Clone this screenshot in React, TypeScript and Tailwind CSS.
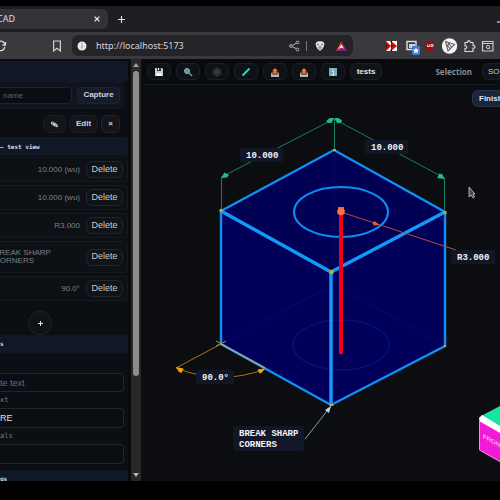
import React from "react";

interface Annotation {
    value: string;
    tall?: boolean;
}

const annotations: Annotation[] = [
    {value: "10.000 (wu)"},
    {value: "10.000 (wu)"},
    {value: "R3.000"},
    {value: "BREAK SHARP\nCORNERS", tall: true},
    {value: "90.0°"},
];

const BrowserBar: React.FC = () => (
    <header className="shrink-0 font-['Noto_Sans',sans-serif] text-[#dedee2]">
        <div className="flex h-[26px] items-end bg-[#1e1d22] pt-[3px]">
            <div className="flex h-5 w-[108px] items-center justify-between self-start rounded-r-md bg-[#333237] pr-[7px] text-[9px]">
                <span className="-ml-[3px]">CAD</span>
                <button aria-label="Close tab">
                    <svg width="8" height="8" viewBox="0 0 8 8" stroke="#eeeeee" strokeWidth="1.3"><path d="M1.6 1.6l4.8 4.8M6.4 1.6L1.6 6.4"/></svg>
                </button>
            </div>
            <button aria-label="New tab" className="ml-[9px] h-5 self-start">
                <svg width="9" height="9" viewBox="0 0 9 9" stroke="#dddddd" strokeWidth="1.2"><path d="M4.5 1v7M1 4.5h7"/></svg>
            </button>
            <button aria-label="Minimize" className="ml-auto h-5 w-[3px] self-start bg-transparent">
                <svg width="3" height="9" viewBox="0 0 3 9" stroke="#ffffff"><path d="M0 7h3"/></svg>
            </button>
        </div>
        <div className="flex h-[27px] items-center bg-[#3a393e]">
            <button aria-label="Reload">
                <svg width="7" height="12" viewBox="0 0 7 12" fill="none" stroke="#d8d8dc" strokeWidth="1.3"><path d="M-2 2C1 .2 4 1.500 4.800 4.500M4.800 7C4 10.500 1 11.500-2 10M5.500 2v3.200H2.300"/></svg>
            </button>
            <button aria-label="Bookmark" className="ml-[45px]">
                <svg width="10" height="12" viewBox="0 0 10 12" fill="none" stroke="#d0d0d4" strokeWidth="1.2"><path d="M1.600 1h6.800v10L5 8.200 1.600 11z"/></svg>
            </button>
            <div className="ml-[10px] flex h-[21px] w-[281px] items-center rounded-md bg-[#242328] pl-[5px] pr-1">
                <svg width="10" height="10" viewBox="0 0 10 10"><circle cx="5" cy="5" r="4.500" fill="#e8e8ea"/><path d="M5 2.200v1M5 4.200v3.300" stroke="#8b8b90" strokeWidth="1.200"/></svg>
                <input aria-label="Address" defaultValue="http://localhost:5173" className="ml-[9px] w-0 min-w-0 flex-1 bg-transparent text-[9px] text-[#d5d5da] outline-none"/>
                <svg width="64" height="14" viewBox="0 0 64 14" fill="none">
                    <path d="M13 3.500L6 7l7 3.500" stroke="#b0b0b5"/>
                    <circle cx="6" cy="7" r="1.400" fill="#242328" stroke="#b0b0b5"/>
                    <circle cx="12.500" cy="3.500" r="1.400" fill="#242328" stroke="#b0b0b5"/>
                    <circle cx="12.500" cy="10.500" r="1.400" fill="#242328" stroke="#b0b0b5"/>
                    <path d="M21.500 2v10" stroke="#77767c"/>
                    <path d="M31.500 3l2-.8h3l2 .8 1 2-1.300 4-3.200 3-3.200-3-1.300-4z" fill="#e1e1e4"/>
                    <path d="M32 5l2 1M38 5l-2 1M33.500 8.500L35 7.500l1.500 1M35 9v1.500" stroke="#55545a"/>
                    <path d="M56.500 2L51 12h5.500z" fill="#ff4724"/>
                    <path d="M56.500 2L62 12h-5.500z" fill="#9e1f63"/>
                    <path d="M51 12l5.500-3.200L62 12z" fill="#662d91"/>
                    <path d="M56.500 5.500L54 9.800l2.500-1.300L59 9.800z" fill="#ffffff"/>
                </svg>
            </div>
            <svg className="ml-auto shrink-0" width="116" height="18" viewBox="384 36 116 18" fill="none">
                <path d="M386 40h11v10h-11z" fill="#f4f4f4"/>
                <path d="M386 40l5 5-5 5zM391 40l6 5-6 5z" fill="#dc0808"/>
                <path d="M386 43l2 2-2 2zM390 40h2v3zM390 50h2v-3zM391 43l2 2-2 2z" fill="#241010"/>
                <path d="M407 40.500h9v8h-9z" stroke="#e0e0e0" strokeWidth="1.400"/>
                <path d="M409 43h6v4h-6z" fill="#d0d0d0"/>
                <rect x="412" y="45" width="8" height="9" rx="1" fill="#3979df"/>
                <path d="M416 46.500l1 2 2.200.2-1.700 1.500.5 2.300-2-1.200-2 1.200.5-2.300-1.700-1.500 2.200-.2z" fill="#ffffff"/>
                <path d="M430 40l4.500 1.500v4.200c0 2-2 4-4.500 5.300-2.500-1.300-4.500-3.300-4.500-5.300v-4.200z" fill="#930f12"/>
                <path d="M427.500 43.500v2h2v-2M431 43.500h2v2h-2z" stroke="#ffffff" strokeWidth=".8"/>
                <circle cx="449.500" cy="45" r="7.700" fill="#f5f5f5"/>
                <path d="M445.500 40.500l9 3-6.500 6.500zM447 45.200l3-3M448 42l3.500 4M446 43l4 4.500" stroke="#606060" strokeWidth="1.100"/>
                <path d="M465 41.500h2.500c-.5-2.500 3.200-2.500 2.800 0h2.700v3c2.600-.5 2.600 3.200 0 2.700v3.300h-8v-3c2.300.3 2.300-3 0-2.700z" stroke="#d4d4d6" strokeWidth="1.200"/>
                <path d="M482.500 40.500h10.500v9.500h-10.500zM482.500 42.500H493" stroke="#c8c8ca" strokeWidth="1.200"/>
                <circle cx="488" cy="46" r="1.600" stroke="#c8c8ca"/><path d="M489.200 47.200l1.300 1.300" stroke="#c8c8ca"/>
            </svg>
        </div>
    </header>
);

const SectionTitle: React.FC<{ children: React.ReactNode }> = ({children}) => (
    <h2 className="shrink-0 bg-[#101725] py-[5px] font-['DejaVu_Sans_Mono',monospace] text-[6px] leading-[8px] font-bold text-[#d5dbe5]">
        {children}
    </h2>
);

const Sidebar: React.FC = () => (
    <aside className="flex w-[128px] shrink-0 flex-col overflow-hidden bg-[#0b0e12] pt-[2px] text-[#d0d4da]">
        <div className="h-5 shrink-0 rounded-tr-sm bg-[#101725]"/>
        <div className="mr-1 flex h-7 shrink-0 items-center gap-[5px] border-y border-[#121a25] bg-[#0f141e] pr-1">
            <input aria-label="View name" placeholder="name" className="h-[17px] w-0 min-w-0 flex-1 rounded-r border border-l-0 border-[#1c2230] bg-[#0a0d12] pl-[3px] text-[8px] text-[#d0d4da] outline-none placeholder:text-[#5f646c]"/>
            <button className="h-[17px] w-[43px] rounded border border-[#1c2234] bg-[#161b2b] text-[8px] font-bold">Capture</button>
        </div>
        <div className="mr-1 flex h-[29px] shrink-0 items-center justify-end gap-[3px] border-b border-[#141a22] pt-[2px] pr-1 text-[8px] font-bold">
            <button aria-label="Rename" className="flex h-[18px] w-[23px] items-center justify-center rounded-md border border-[#1b1f25] bg-[#11151a]">
                <svg width="9" height="7" viewBox="0 0 9 7"><path d="M1 .8l2.500 0 4 2.800L8 6.200 5 5.800 1 3z" fill="#bfc3c8"/><path d="M3.500 1L2 3.500M6.300 4L5 5.800" stroke="#30343a" strokeWidth=".6"/></svg>
            </button>
            <button className="h-[18px] w-[29px] rounded-md border border-[#1b1f25] bg-[#11151a]">Edit</button>
            <button className="h-[18px] w-[19px] rounded-md border border-[#302022] bg-[#14151a]">×</button>
        </div>
        <SectionTitle>— test view</SectionTitle>
        <ul className="flex shrink-0 flex-col gap-[3px] pt-px">
            {annotations.map((a, i) => (
                <li key={i} className={`${a.tall ? "h-8 justify-between" : "h-[25px] justify-end"} flex items-center gap-[6px] rounded-r border border-l-0 border-[#161a1f] bg-[#0d1014] pr-1`}>
                    <span className={`${a.tall ? "-ml-[6px]" : ""} text-[8px] leading-[8px] whitespace-pre text-[#7d8186]`}>{a.value}</span>
                    <button className="h-[17px] w-[37px] shrink-0 rounded-md border border-[#23272c] bg-[#101317] text-[9px] text-[#c9cbcf]">Delete</button>
                </li>
            ))}
        </ul>
        <button aria-label="Add annotation" className="mt-[10px] ml-7 flex size-6 shrink-0 items-center justify-center rounded-full border border-[#202429] bg-[#101316]">
            <svg width="5" height="5" viewBox="0 0 5 5" stroke="#e0e0e0"><path d="M2.500 0v5M0 2.500h5"/></svg>
        </button>
        <SectionTitle>s</SectionTitle>
        <div className="mr-1 flex shrink-0 flex-col pt-5 font-['DejaVu_Sans_Mono',monospace] text-[7px] text-[#7d8186]">
            <input aria-label="Note text" placeholder="te text" className="h-[19px] w-full rounded-r border border-l-0 border-[#22262b] bg-[#0a0d11] font-['Liberation_Sans',sans-serif] text-[9px] outline-none placeholder:text-[#6a6e74]"/>
            <label htmlFor="prefix" className="flex h-4 items-center">xt</label>
            <input id="prefix" defaultValue="RE" className="h-5 w-full rounded-r border border-l-0 border-[#22262b] bg-[#0a0d11] font-['Liberation_Sans',sans-serif] text-[9px] text-[#dfe1e4] outline-none"/>
            <label htmlFor="decimals" className="flex h-4 items-center">als</label>
            <input id="decimals" className="h-5 w-full rounded-r border border-l-0 border-[#22262b] bg-[#0a0d11] text-[9px] outline-none"/>
        </div>
        <div className="mt-[6px]"><SectionTitle>gs</SectionTitle></div>
    </aside>
);

const Scrollbar: React.FC = () => (
    <div className="ml-[3px] flex w-[10px] shrink-0 flex-col items-center justify-between bg-[#272828] py-1">
        <div className="flex h-[313px] flex-col items-center">
            <svg width="6" height="4" viewBox="0 0 6 4" fill="#a0a0a0"><path d="M3 0l3 4H0z"/></svg>
            <div className="mt-1 w-[6px] flex-1 rounded-full bg-[#8b8c8c]"/>
        </div>
        <svg width="6" height="4" viewBox="0 0 6 4" fill="#b0b0b0"><path d="M0 0h6L3 4z"/></svg>
    </div>
);

const Tray = () => (
    <>
        <path d="M1 6h2v2h4V6h2v4H1z" fill="#b6b4b5"/>
        <path d="M1 6l1-1.500h6L9 6 7 8H3z" fill="#8e5542"/>
        <path d="M5 1l2.800 3H6.200v2.500H3.800V4H2.200z" fill="#e77a45"/>
    </>
);

const tools: { label: string; icon: React.ReactNode }[] = [
    {label: "Save", icon: <><path d="M1 1h7l1 1v7H1z" fill="#c9cccd"/><path d="M3 1h4v3H3z" fill="#33383d"/><path d="M4 1h1v2H4zM2.500 6h5v3h-5z" fill="#fafafa"/></>},
    {label: "Zoom to fit", icon: <><path d="M6 6l3 3" stroke="#8a8e93" strokeWidth="1.600"/><circle cx="4" cy="4" r="2.500" fill="#4b98a1" stroke="#a0b1b4"/></>},
    {label: "Wireframe", icon: <g stroke="#50555a" strokeWidth=".6" fill="none"><path d="M5 .8v8.400M1.300 3l7.400 4M8.700 3L1.300 7"/><path d="M5 3l1.800 1v2L5 7 3.200 6V4zM5 1l3.500 2v4L5 9 1.500 7V3z"/></g>},
    {label: "Draw", icon: <path d="M1.500 8.500L8.500 1.500" stroke="#32d5bd" strokeWidth="2"/>},
    {label: "Import", icon: <Tray/>},
    {label: "Export", icon: <Tray/>},
    {label: "About", icon: <><rect x="1" y="1" width="8" height="8" fill="#79a9bd"/><path d="M5 2v1.300M4 4.500h1.200V8M3.800 8h2.600" stroke="#edf8fc" strokeWidth="1.200"/></>},
];

const Toolbar: React.FC = () => (
    <div className="flex h-[26px] shrink-0 items-center gap-[5px] overflow-hidden border-b border-[#14171b] bg-[#090b0f] pl-[5px]">
        {tools.map((t) => (
            <button key={t.label} aria-label={t.label} className="flex h-[17px] w-6 shrink-0 items-center justify-center rounded-md border border-[#1b1f24] bg-[#0e1115]">
                <svg width="10" height="10" viewBox="0 0 10 10">{t.icon}</svg>
            </button>
        ))}
        <button className="h-[17px] w-8 shrink-0 rounded-md border border-[#1b1f24] bg-[#101318] text-[8px] font-bold text-[#e0e3e7]">tests</button>
        <label htmlFor="selection" className="ml-auto shrink-0 font-['Noto_Sans',sans-serif] text-[8px] font-bold text-[#868b92]">Selection</label>
        <select id="selection" className="ml-[5px] h-[17px] w-[18px] shrink-0 appearance-none overflow-hidden rounded-l-md border border-r-0 border-[#1b1f24] bg-[#11141a] pl-[5px] text-[8px] text-[#c0c4ca]">
            <option>SO</option>
        </select>
    </div>
);

const Callout: React.FC<{ x: number; y: number; w: number; lines: string[] }> = ({x, y, w, lines}) => (
    <g>
        <rect x={x} y={y} width={w} height={lines.length * 11 + 3} rx="2" fill="#111726"/>
        {lines.map((line, i) => (
            <text key={line} x={x + 6} y={y + 10 + i * 11} fill="#f1f3f7" className="font-['Liberation_Mono',monospace] text-[9px] font-bold">{line}</text>
        ))}
    </g>
);

const Viewport: React.FC = () => (
    <div className="relative min-h-0 flex-1 overflow-hidden bg-[#0b0d10]">
        <svg className="block max-w-none" width="358" height="396" viewBox="142 85 358 396" fill="none" role="img" aria-label="Dimensioned cube">
            <path d="M334 150L445 212V346L331 405 221 344V211z" fill="#00005a"/>
            <path d="M334 150L445 212 331 272 221 211z" fill="#000055"/>
            <path d="M334 151V284L222 344M334 284L445 346" stroke="#020c6c"/>
            <ellipse cx="341" cy="345" rx="48" ry="25" stroke="#03107a" strokeWidth="1.500"/>
            <ellipse cx="341" cy="212" rx="47" ry="25" stroke="#0b8cf0" strokeWidth="2"/>
            <path d="M221 211L334 150 445 212V346L331 405 221 344z" stroke="#1090f5" strokeWidth="2.400"/>
            <path d="M221 211L331 272 445 212M331 272V405" stroke="#109af8" strokeWidth="3.500"/>

            {/* linear dimensions */}
            <path d="M221.500 210V177L334 119 444.500 178V211M334.500 119V150" stroke="#187f5b"/>
            <g fill="#20bd82">
                <path d="M221 178l3.500-5.500 4.500 2.500-2 2.500zM444.500 179l-7.500-1 2.500-4.500 3 1z"/>
                <path d="M334 118h-4l-3.500 2.500 1 2.500h4zM334.500 118h4l3.500 2.500-1 2.500h-4z"/>
            </g>

            {/* angle */}
            <path d="M221 344L176 368" stroke="#a57618"/>
            <path d="M216 341l10 5M226 341l-10 5" stroke="#a58d45"/>
            <path d="M221 344L265 368" stroke="#99a195" strokeWidth="1.500"/>
            <path d="M176 368Q221 386 265 369" stroke="#af7313"/>
            <path d="M176 367l7.500 1.500-2 4.500-2.500-1zM265 368.500l-7.500 1 2 4 2.500-1z" fill="#f5a110"/>

            {/* radius */}
            <path d="M341 212V354" stroke="#f00018" strokeWidth="4"/>
            <path d="M341 212L456 250" stroke="#b74c36"/>
            <path d="M379.500 225l-5-4-2 2.500 1.500 2z" fill="#f45a35"/>
            <path d="M338 207h6v4h-6z" fill="#c17a38"/>
            <circle cx="341" cy="211.500" r="3.800" fill="#ff7040"/>

            {/* leader */}
            <path d="M305 439L331 406" stroke="#8998ae"/>
            <path d="M331 406l-6 4 4 3z" fill="#b8d9ef"/>
            <g fill="#d2a41d">
                <path d="M219.500 209h3v3h-3zM443.500 211h3v3h-3zM329.500 270h4v4h-4zM329.500 404h4v2h-4zM444 345h2v2h-2zM333 149h3v2h-3z"/>
            </g>

            <Callout x={240} y={148} w={43} lines={["10.000"]}/>
            <Callout x={365} y={140} w={43} lines={["10.000"]}/>
            <Callout x={451} y={250} w={44} lines={["R3.000"]}/>
            <Callout x={196} y={370} w={38} lines={["90.0°"]}/>
            <Callout x={233} y={426} w={71} lines={["BREAK SHARP", "CORNERS"]}/>

            {/* view cube */}
            <path d="M479 418L500 431V462L479 450z" fill="#f21bd5"/>
            <path d="M481 416L500 406V427z" fill="#18e5a0"/>
            <path d="M479 418l3-3 18 11v7L479 421z" fill="#ffffff"/>
            <path d="M479.500 419v31L500 461.500" stroke="#ef8be5"/>
            <text transform="translate(483 438) skewY(29)" fill="#ffe4fa" className="font-['Liberation_Sans',sans-serif] text-[6px]">FRONT</text>
            <path d="M469 187v10l2-2 2 3 1.500-1-1.500-3h2z" fill="#4c4d50" stroke="#c9c9c9" strokeWidth=".8"/>
        </svg>
        <button className="absolute top-[5px] right-0 h-[17px] w-7 overflow-hidden rounded-l-md border border-r-0 border-[#24334c] bg-[#1a2538] pl-[6px] text-left text-[8px] font-bold text-[#dce3ef]">Finish</button>
    </div>
);

const App: React.FC = () => {
    return (
        <div className="flex h-screen w-full flex-col overflow-hidden bg-black pt-[6px] pb-[19px] font-['Liberation_Sans',Arial,sans-serif]">
            <BrowserBar/>
            <main className="flex min-h-0 flex-1 bg-[#090b0e]">
                <Sidebar/>
                <Scrollbar/>
                <section className="ml-px flex min-w-0 flex-1 flex-col">
                    <Toolbar/>
                    <Viewport/>
                </section>
            </main>
        </div>
    );
};

export default App;
